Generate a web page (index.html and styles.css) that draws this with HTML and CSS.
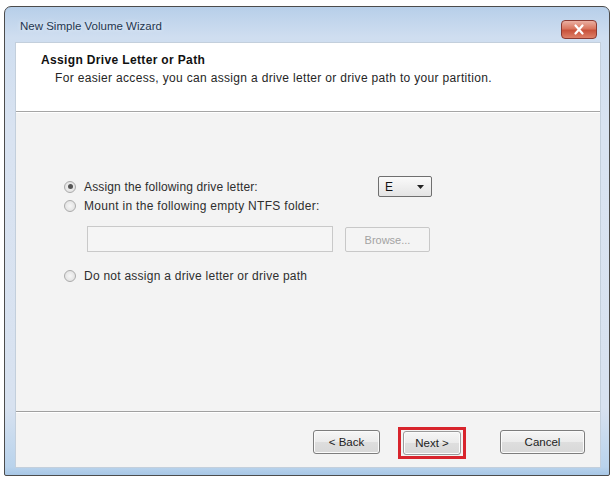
FILE: index.html
```html
<!DOCTYPE html>
<html>
<head>
<meta charset="utf-8">
<link rel="stylesheet" href="styles.css">
</head>
<body>
<div class="window">
  <div class="titlebar">
    <span class="title">New Simple Volume Wizard</span>
    <div class="close">
      <svg width="14" height="11" viewBox="0 0 14 11"><path d="M3.5 1.5 L10.5 9.5 M10.5 1.5 L3.5 9.5" stroke="#fff" stroke-width="2.2" stroke-linecap="round"/></svg>
    </div>
  </div>
  <div class="client">
    <div class="header">
      <div class="h-title">Assign Drive Letter or Path</div>
      <div class="h-sub">For easier access, you can assign a drive letter or drive path to your partition.</div>
    </div>
    <div class="content">
      <div class="options">
        <div class="row r1">
          <span class="radio checked"></span>
          <span class="label">Assign the following drive letter:</span>
          <div class="combo"><span>E</span><svg width="7" height="4" viewBox="0 0 7 4"><path d="M0 0 H7 L3.5 4 Z" fill="#222"/></svg></div>
        </div>
        <div class="row r2">
          <span class="radio"></span>
          <span class="label">Mount in the following empty NTFS folder:</span>
        </div>
        <div class="folder-row">
          <div class="textbox"></div>
          <div class="browse">Browse...</div>
        </div>
        <div class="row r3">
          <span class="radio"></span>
          <span class="label">Do not assign a drive letter or drive path</span>
        </div>
      </div>
    </div>
    <div class="footer">
      <div class="btn">&lt; Back</div>
      <div class="highlight"><div class="btn">Next &gt;</div></div>
      <div class="btn cancel">Cancel</div>
    </div>
  </div>
</div>
</body>
</html>
```
FILE: styles.css
```css
html, body {
  margin: 0;
  padding: 0;
  background: #ffffff;
}
body {
  font-family: "Liberation Sans", Arial, sans-serif;
  font-size: 12px;
  color: #1c1c1c;
}
.window {
  box-sizing: border-box;
  width: 606px;
  height: 470px;
  margin: 6px 0 0 4px;
  border: 1px solid #4c4c4c;
  border-radius: 7px 7px 2px 2px;
  background: linear-gradient(to bottom, #b7cfe9 0px, #cfdef0 30px, #d9e3f1 120px, #d8e2f0 400px, #b9d3ec 460px, #a3c4e4 470px);
  display: flex;
  flex-direction: column;
}
.titlebar {
  height: 35px;
  flex: none;
  display: flex;
  align-items: flex-start;
  padding: 0 12px 0 15px;
}
.title {
  margin-top: 13px;
  font-size: 11.5px;
  color: #24364f;
  text-shadow: 0 0 4px #eef4fb;
}
.close {
  margin-left: auto;
  margin-top: 13px;
  width: 36px;
  height: 19px;
  box-sizing: border-box;
  border: 1px solid #8a3a32;
  border-radius: 4px;
  background: linear-gradient(to bottom, #ebb0a2 0%, #d9765f 45%, #c8523b 55%, #de8068 100%);
  display: flex;
  align-items: center;
  justify-content: center;
}
.client {
  flex: 1;
  margin: 0 8px 7px 10px;
  background: #f3f3f3;
  border: 1px solid #c3cfdc;
  display: flex;
  flex-direction: column;
}
.header {
  height: 69px;
  flex: none;
  background: #ffffff;
  border-bottom: 1px solid #a5a5a5;
  box-shadow: 0 1px 0 #ffffff;
  box-sizing: border-box;
  padding: 10px 0 0 25px;
}
.h-title {
  font-weight: bold;
  font-size: 12px;
  letter-spacing: 0.35px;
  line-height: 15px;
  color: #111;
}
.h-sub {
  margin-top: 3px;
  padding-left: 14px;
  line-height: 15px;
  letter-spacing: 0.33px;
  color: #262626;
}
.content {
  flex: 1;
  border-bottom: 1px solid #a0a0a0;
  box-shadow: 0 1px 0 #ffffff;
  padding: 64px 0 0 48px;
}
.options {
  width: 368px;
}
.row {
  display: flex;
  align-items: center;
  color: #2e2e2e;
  letter-spacing: 0.15px;
}
.r1 { height: 21px; }
.r2 { height: 16px; margin-top: 1px; }
.r3 { height: 16px; margin-top: 16px; }
.r2 .label { letter-spacing: 0.3px; }
.r3 .label { letter-spacing: 0.25px; }
.radio {
  width: 12px;
  height: 12px;
  box-sizing: border-box;
  border-radius: 50%;
  border: 1px solid #ababab;
  background: radial-gradient(circle at 50% 50%, #f6f6f6 0%, #dcdcdc 100%);
  margin-right: 8px;
  display: flex;
  align-items: center;
  justify-content: center;
  flex: none;
}
.radio.checked::after {
  content: "";
  width: 5px;
  height: 5px;
  border-radius: 50%;
  background: #555;
}
.combo {
  margin-left: auto;
  width: 54px;
  height: 21px;
  box-sizing: border-box;
  border: 1px solid #6f6f6f;
  border-radius: 2px;
  background: linear-gradient(to bottom, #fafafa, #e4e4e4);
  display: flex;
  align-items: center;
  padding: 0 7px 0 6px;
  justify-content: space-between;
  color: #111;
}
.folder-row {
  display: flex;
  margin: 12px 0 0 23px;
  gap: 12px;
}
.textbox {
  width: 246px;
  height: 26px;
  box-sizing: border-box;
  border: 1px solid #c9c9c9;
  background: #f5f5f5;
}
.browse {
  width: 85px;
  height: 25px;
  margin-top: 1px;
  box-sizing: border-box;
  border: 1px solid #c8c8c8;
  border-radius: 2px;
  background: #f4f4f4;
  color: #a3a3a3;
  font-size: 11px;
  display: flex;
  align-items: center;
  justify-content: center;
}
.footer {
  height: 54px;
  flex: none;
  margin-top: 1px;
  display: flex;
  align-items: flex-start;
  padding: 17px 15px 0 0;
  justify-content: flex-end;
  box-sizing: border-box;
  font-size: 11.5px;
}
.btn {
  width: 67px;
  height: 24px;
  box-sizing: border-box;
  border: 1px solid #7d7d7d;
  border-radius: 3px;
  background: linear-gradient(to bottom, #f6f6f6 0%, #ebebeb 50%, #dedede 52%, #d8d8d8 100%);
  box-shadow: inset 0 0 0 1px #fbfbfb;
  display: flex;
  align-items: center;
  justify-content: center;
  color: #222;
}
.highlight {
  margin: -3px 0 0 18px;
  border: 3px solid #d8242c;
  padding: 1px 2px;
}
.highlight .btn {
  width: 58px;
  border-color: #9a9a9a;
}
.cancel {
  margin-left: 34px;
  width: 85px;
}
```
